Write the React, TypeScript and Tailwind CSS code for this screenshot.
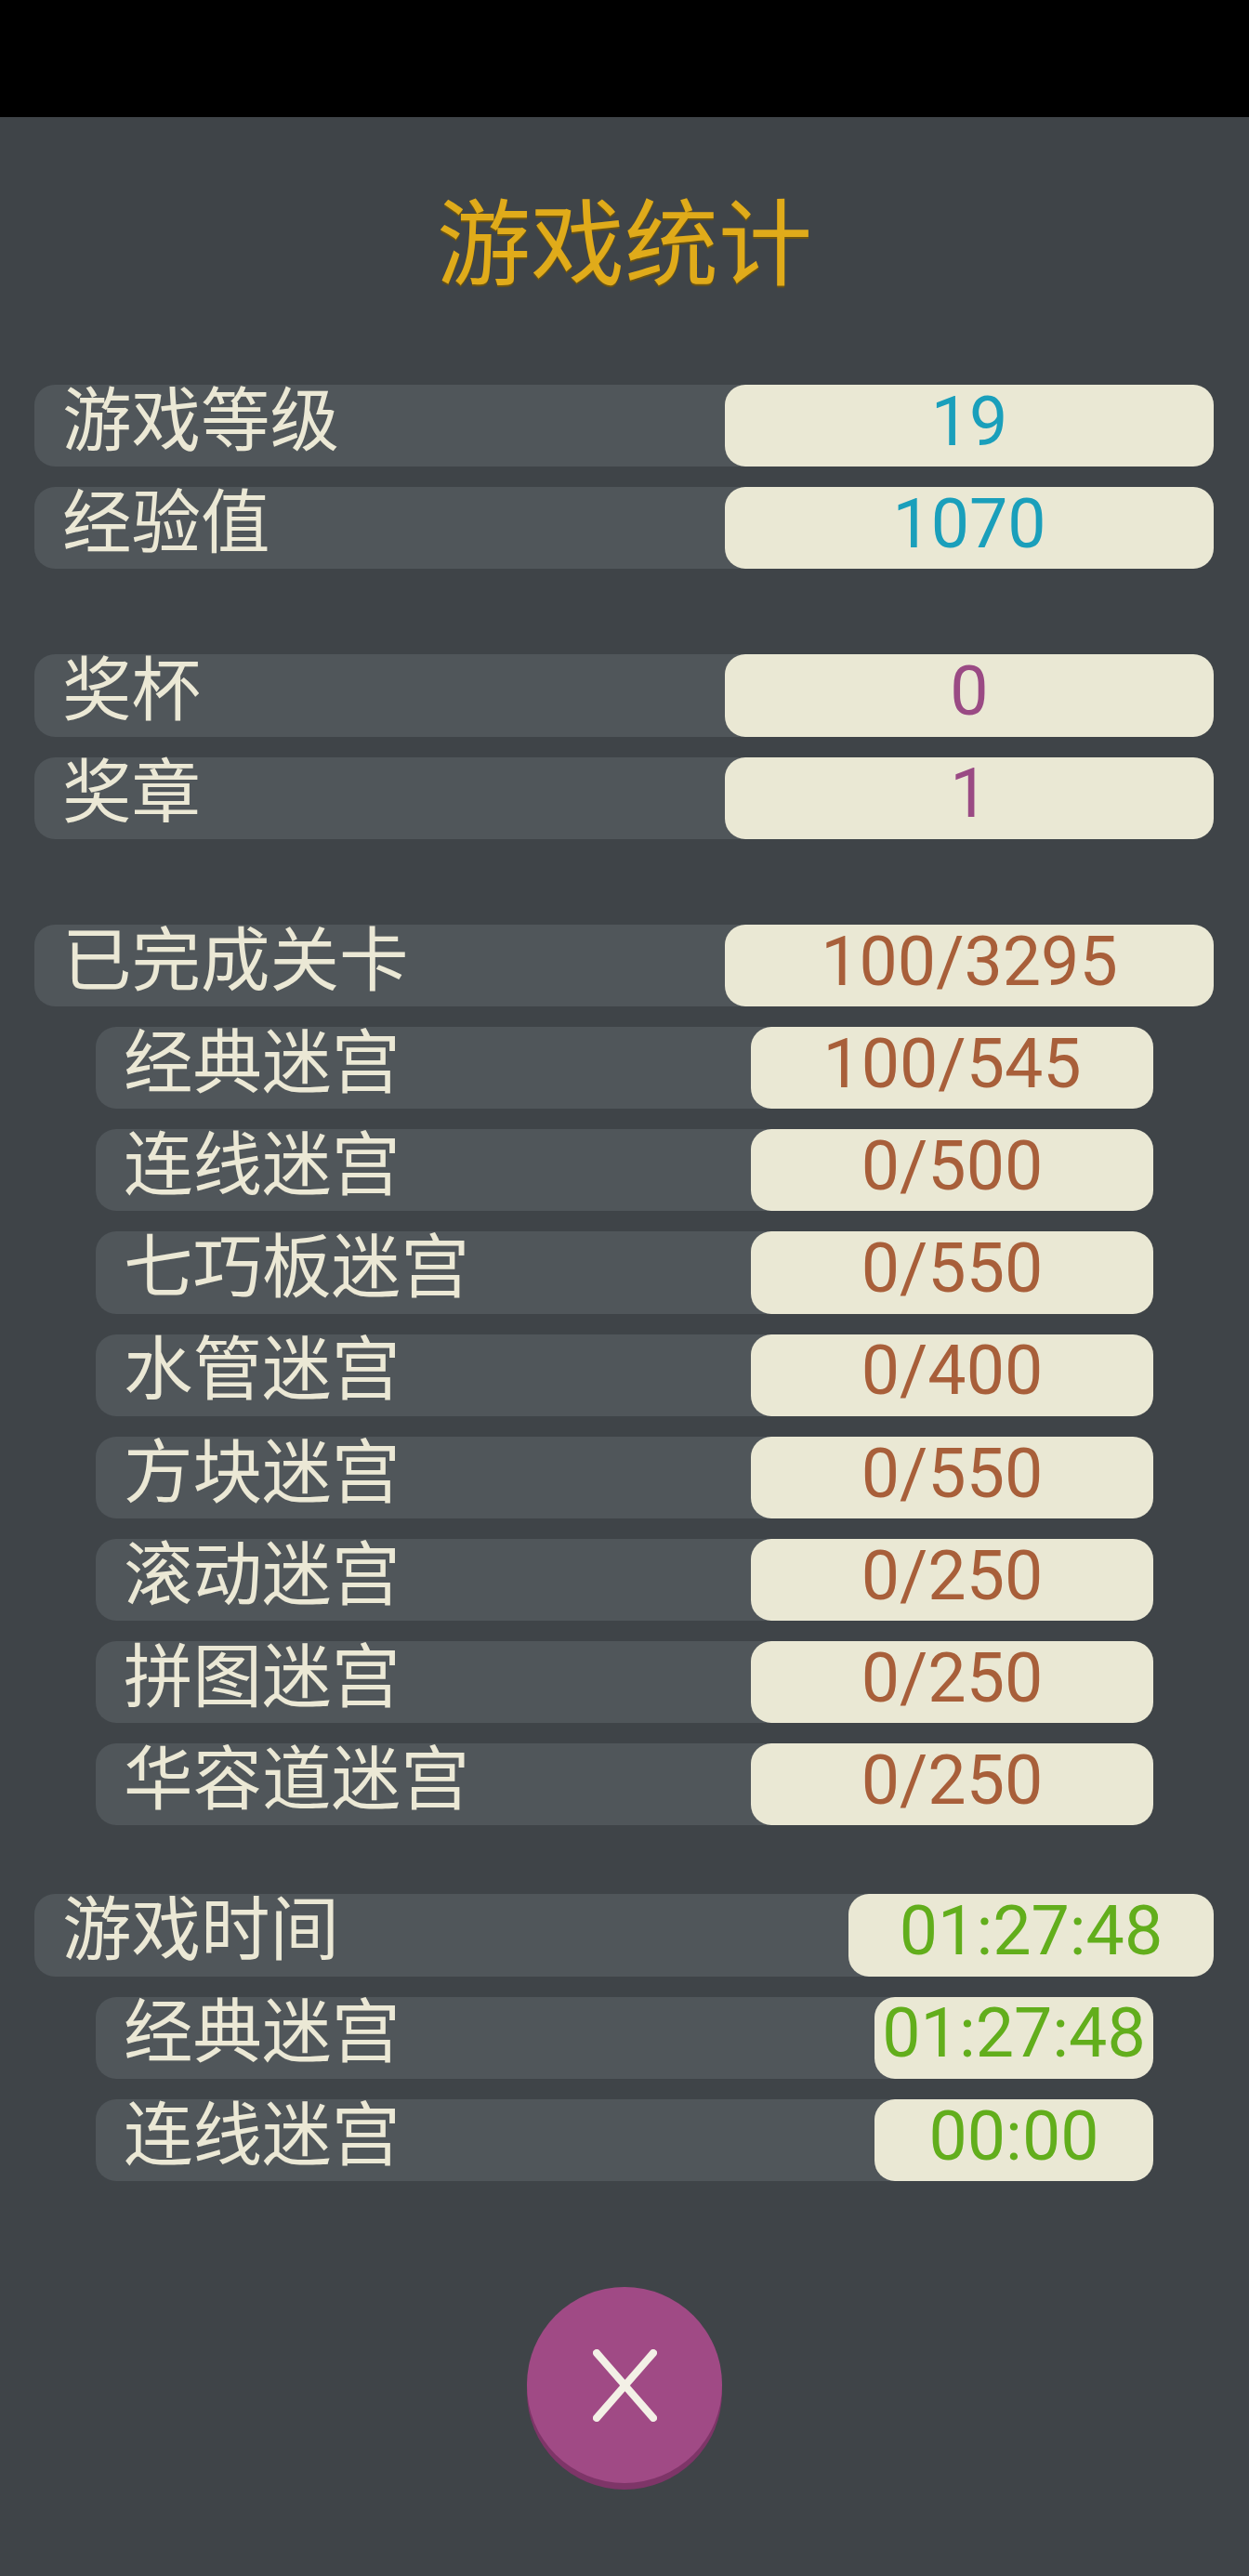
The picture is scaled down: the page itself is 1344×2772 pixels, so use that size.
const Row = ({
  label,
  value,
  color,
  sub,
  width,
}: {
  label: string;
  value: string;
  color: string;
  sub?: boolean;
  width: string;
}) => (
  <div className={`flex h-[88.2px] rounded-[22px] bg-[#50565a] ${sub ? 'ml-[66px] mr-[65px]' : ''}`}>
    <div className="flex flex-1 items-center pb-[8px] pl-[30px] text-[74.5px] leading-none text-[#ebe8d5]">
      {label}
    </div>
    <div
      className={`flex items-center justify-center rounded-[22px] bg-[#eae8d4] pb-[7px] text-[73.5px] leading-none ${width} ${color}`}
    >
      {value}
    </div>
  </div>
);

const mazes = [
  { label: '经典迷宫', value: '100/545' },
  { label: '连线迷宫', value: '0/500' },
  { label: '七巧板迷宫', value: '0/550' },
  { label: '水管迷宫', value: '0/400' },
  { label: '方块迷宫', value: '0/550' },
  { label: '滚动迷宫', value: '0/250' },
  { label: '拼图迷宫', value: '0/250' },
  { label: '华容道迷宫', value: '0/250' },
];

export default function App() {
  return (
    <div className="flex h-[2772px] w-[1344px] flex-col overflow-hidden bg-[#3f4448] font-['Roboto','Noto_Sans_CJK_SC',sans-serif]">
      {/* status bar */}
      <div className="h-[126px] bg-black" />

      <h1 className="mt-[81px] h-[115px] text-center text-[101px] leading-[115px] text-[#e0ab1a] [text-shadow:0_2px_0_#6b5312]">
        游戏统计
      </h1>

      <div className="mt-[92px] flex flex-col gap-[22px] pl-[37px] pr-[38px]">
        <Row label="游戏等级" value="19" color="text-[#1a9fbb]" width="w-[526px]" />
        <Row label="经验值" value="1070" color="text-[#1a9fbb]" width="w-[526px]" />

        <div className="mt-[70px] flex flex-col gap-[22px]">
          <Row label="奖杯" value="0" color="text-[#9a4a84]" width="w-[526px]" />
          <Row label="奖章" value="1" color="text-[#9a4a84]" width="w-[526px]" />
        </div>

        <div className="mt-[70px] flex flex-col gap-[22px]">
          <Row label="已完成关卡" value="100/3295" color="text-[#a85f3a]" width="w-[526px]" />
          {mazes.map((item) => (
            <Row key={item.label} label={item.label} value={item.value} color="text-[#a85f3a]" sub width="w-[433px]" />
          ))}
        </div>

        <div className="mt-[52px] flex flex-col gap-[22px]">
          <Row label="游戏时间" value="01:27:48" color="text-[#62ae1c]" width="w-[393px]" />
          <Row label="经典迷宫" value="01:27:48" color="text-[#62ae1c]" sub width="w-[300px]" />
          <Row label="连线迷宫" value="00:00" color="text-[#62ae1c]" sub width="w-[300px]" />
        </div>
      </div>

      <button className="mx-auto mt-[114px] flex h-[211px] w-[210px] items-center justify-center rounded-full bg-[#a04a85] shadow-[0_7px_0_#7e3568]">
        <svg width="69" height="78" viewBox="0 0 69 78" fill="none" stroke="#f3f0e6" strokeWidth="8" strokeLinecap="round">
          <path d="M4 4L65 74M65 4L4 74" />
        </svg>
      </button>
    </div>
  );
}
